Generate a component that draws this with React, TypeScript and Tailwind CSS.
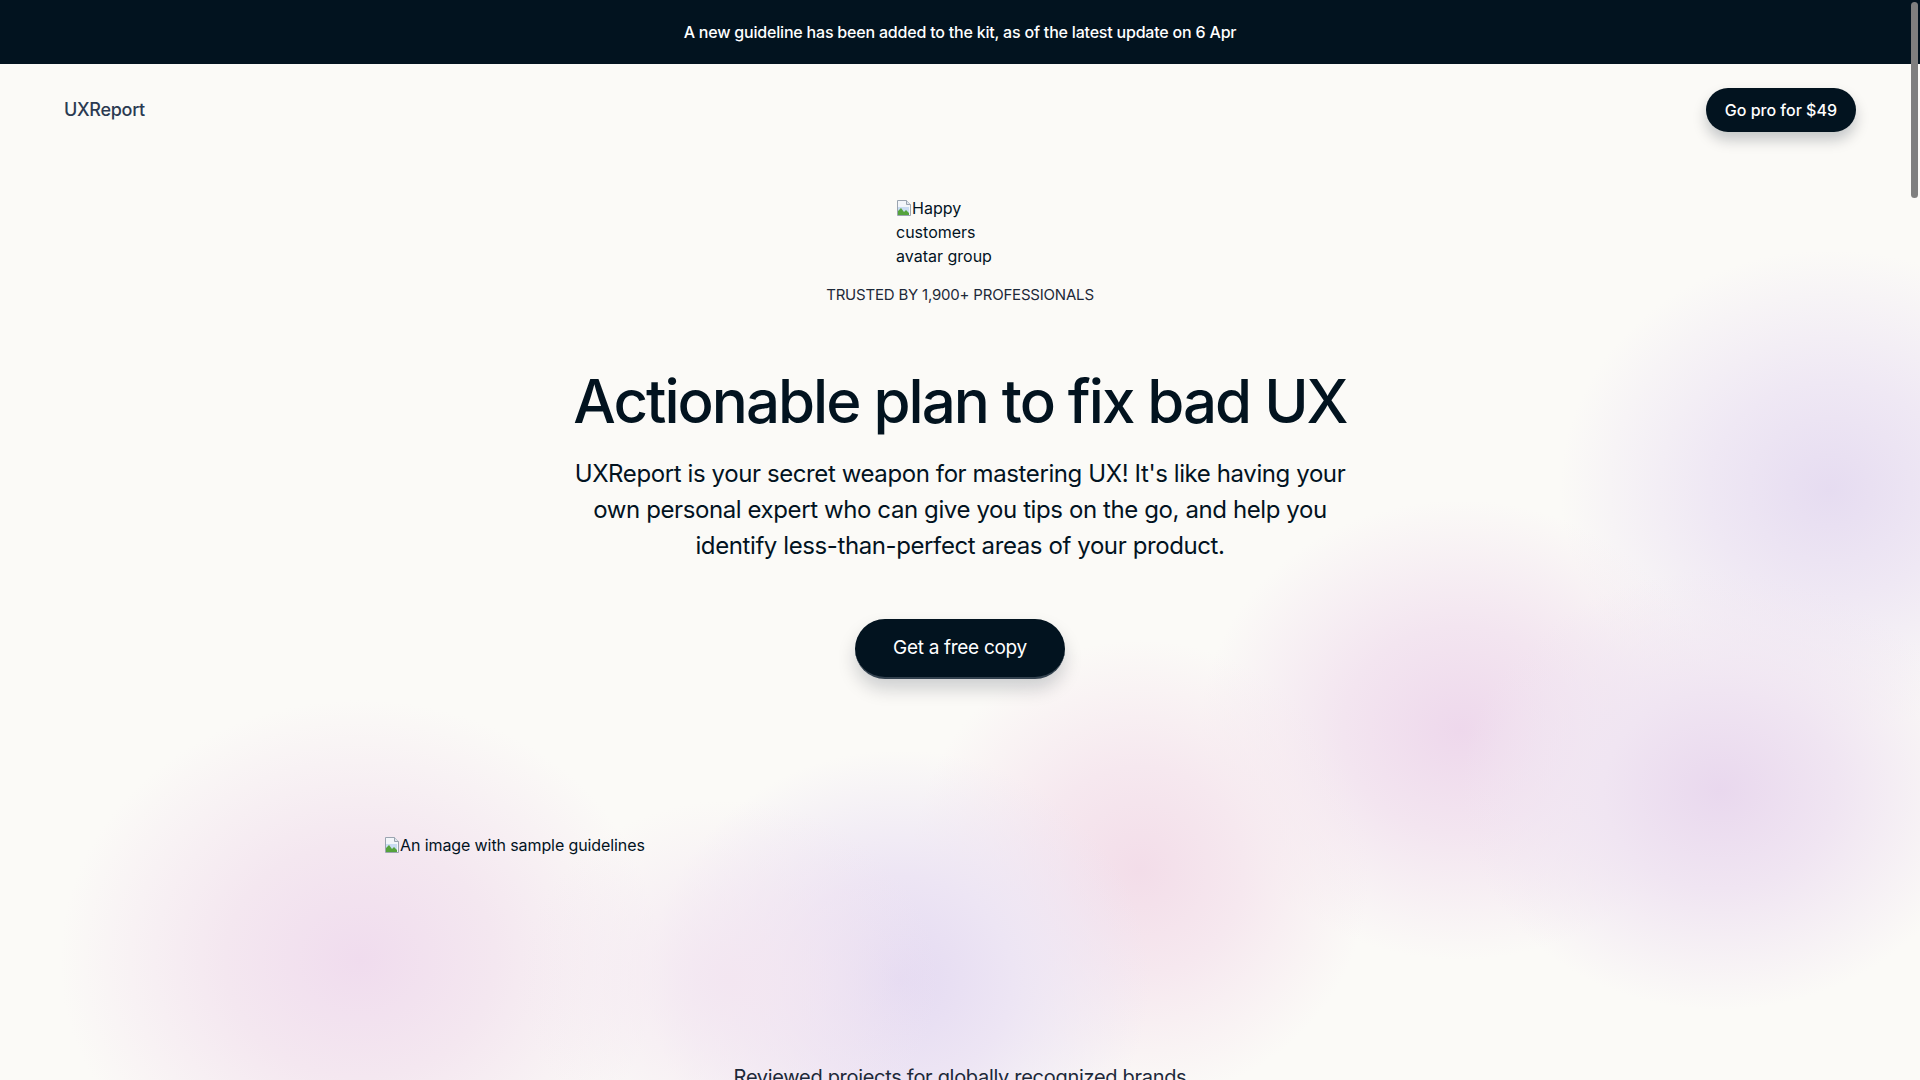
import React from 'react';

const BrokenImage = () => (
  <svg width="16" height="16" viewBox="0 0 16 16" className="inline-block align-[-2px] shrink-0">
    <path d="M1.5 0.5h9l4 4v11h-13z" fill="#f3f6fa" stroke="#9aa4b0" />
    <path d="M10.5 0.5v4h4" fill="#dfe5ec" stroke="#9aa4b0" />
    <path d="M2 7h11v6H2z" fill="#c9dcf2" />
    <path d="M2 15V11l3-3 3 4 2-2 3 3v2z" fill="#55a33c" />
  </svg>
);

const blobs = [
  { id: 'r1', cls: 'left-[1560px] top-[250px] w-[540px] h-[480px] bg-[radial-gradient(closest-side,#e6dcf1_0%,#efe8f4_45%,transparent_100%)]' },
  { id: 'r2', cls: 'left-[1200px] top-[500px] w-[520px] h-[460px] bg-[radial-gradient(closest-side,#eed8ec_0%,#f3e5f0_45%,transparent_100%)]' },
  { id: 'r3', cls: 'left-[1460px] top-[570px] w-[520px] h-[440px] bg-[radial-gradient(closest-side,#e9d8ee_0%,#f0e5f2_45%,transparent_100%)]' },
  { id: 'c1', cls: 'left-[910px] top-[640px] w-[460px] h-[460px] bg-[radial-gradient(closest-side,#f3dde9_0%,#f6e8ef_45%,transparent_100%)]' },
  { id: 'c2', cls: 'left-[650px] top-[750px] w-[500px] h-[460px] bg-[radial-gradient(closest-side,#e4daf2_0%,#ede5f4_45%,transparent_100%)]' },
  { id: 'l1', cls: 'left-[60px] top-[700px] w-[600px] h-[520px] bg-[radial-gradient(closest-side,#f0dcee_0%,#f4e7f0_45%,transparent_100%)]' },
  { id: 'm1', cls: 'left-[520px] top-[800px] w-[420px] h-[360px] bg-[radial-gradient(closest-side,#f3e6f1_0%,transparent_100%)]' },
];

export default function App() {
  return (
    <div className="relative h-[1080px] overflow-hidden bg-[#fbfaf7] text-[#02131f] font-['Inter',sans-serif]">
      {/* background blobs */}
      {blobs.map((b) => (
        <div key={b.id} className={`pointer-events-none absolute rounded-full ${b.cls}`} />
      ))}

      <div className="relative">
        {/* Announcement bar */}
        <div className="h-16 bg-[#02131f] flex items-center justify-center">
          <p className="text-base font-medium text-white tracking-[-0.2px]">
            A new guideline has been added to the kit, as of the latest update on 6 Apr
          </p>
        </div>

        {/* Nav */}
        <nav className="flex items-center justify-between px-16 pt-6">
          <a className="text-lg font-medium text-[#2b3a52] tracking-[-0.3px]">UXReport</a>
          <button className="h-11 px-[19px] rounded-full bg-[#02131f] text-white text-base font-medium shadow-[0_8px_14px_rgba(2,19,31,0.22)]">
            Go pro for $49
          </button>
        </nav>

        {/* Hero */}
        <section className="flex flex-col items-center text-center">
          <div className="mt-16 w-32 text-left text-base leading-6 text-[#02131f]">
            <BrokenImage />
            Happy customers avatar group
          </div>
          <p className="mt-[15px] text-[15px] leading-6 text-[#1d2939] tracking-[-0.2px]">TRUSTED BY 1,900+ PROFESSIONALS</p>
          <h1 className="mt-[61px] text-[60px] leading-[66px] font-medium tracking-[-2px]">
            Actionable plan to fix bad UX
          </h1>
          <p className="mt-[22px] max-w-[780px] text-2xl leading-9 tracking-[-0.4px]">
            UXReport is your secret weapon for mastering UX! It's like having your own personal expert who can give you tips on the go, and help you identify less-than-perfect areas of your product.
          </p>
          <button className="mt-[55px] h-[60px] w-[210px] rounded-full bg-[#02131f] text-white text-[19px] tracking-[-0.3px] border-b-2 border-[#33424f] shadow-[0_10px_18px_rgba(2,19,31,0.18)]">
            Get a free copy
          </button>
        </section>

        {/* Sample image */}
        <section className="max-w-[1152px] mx-auto mt-[154px]">
          <div className="text-base leading-6 tracking-[-0.1px]">
            <BrokenImage />
            An image with sample guidelines
          </div>
        </section>

        {/* Brands */}
        <section className="mt-[206px] text-center">
          <p className="text-xl text-[#1d2939] tracking-[-0.3px]">Reviewed projects for globally recognized brands</p>
        </section>
      </div>

      {/* overlay scrollbar thumb */}
      <div className="absolute right-[2px] top-[2px] w-[7px] h-[196px] rounded-full bg-[#7f7f7f]" />
    </div>
  );
}
